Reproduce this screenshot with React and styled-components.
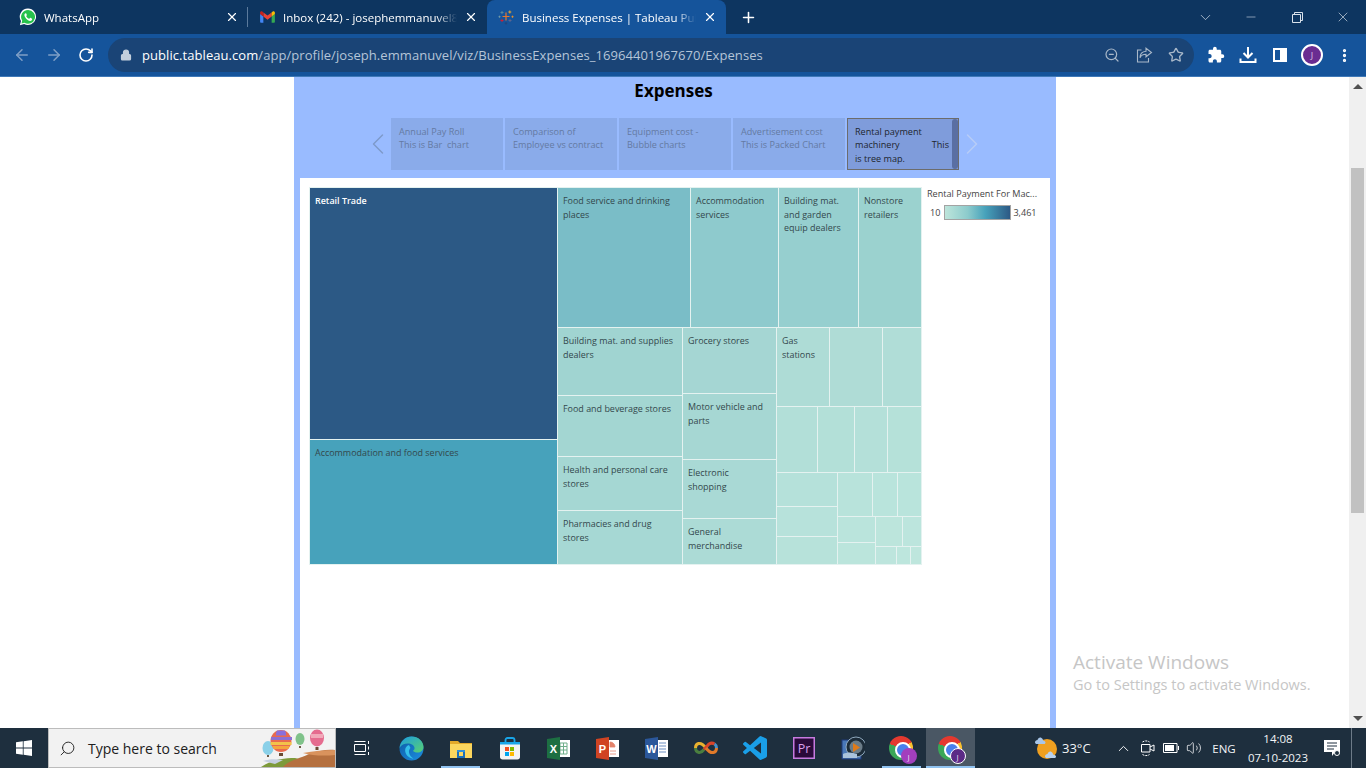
import React from 'react';
import styled, { createGlobalStyle } from 'styled-components';
import { ArrowLeft, ArrowRight, RotateCw, Lock, ZoomOut, Star, X, Plus, ChevronDown, ChevronUp, ChevronLeft, ChevronRight, Minus, Search as SearchGlyph, Volume2, MoreVertical } from 'lucide-react';
import { MdExtension } from 'react-icons/md';

const GlobalStyle = createGlobalStyle`
  html, body { margin: 0; padding: 0; background: #fff; overflow: hidden; }
  * { box-sizing: border-box; }
`;

/* treemap layout: nested rows and columns, sizes in px along the parent's axis */
const cell = (size, color, label, extra = {}) => ({ size, color, label, ...extra });
const group = (dir, size, children) => ({ dir, size, children });

const TREE = group('row', 612, [
  group('col', 248, [
    cell(252, '#2c5985', ['Retail Trade'], { light: true }),
    cell(125, '#47a2bb', ['Accommodation and food services']),
  ]),
  group('col', 364, [
    group('row', 140, [
      cell(133, '#7abdc7', ['Food service and drinking', 'places']),
      cell(88, '#8ecacd', ['Accommodation', 'services']),
      cell(80, '#96cfcf', ['Building mat.', 'and garden', 'equip dealers']),
      cell(63, '#9bd2cf', ['Nonstore', 'retailers']),
    ]),
    group('row', 237, [
      group('col', 125, [
        cell(68, '#a0d4d1', ['Building mat. and supplies', 'dealers']),
        cell(61, '#a3d6d2', ['Food and beverage stores']),
        cell(54, '#a5d7d3', ['Health and personal care', 'stores']),
        cell(54, '#a6d8d4', ['Pharmacies and drug', 'stores']),
      ]),
      group('col', 94, [
        cell(66, '#a5d6d3', ['Grocery stores']),
        cell(66, '#a6d7d3', ['Motor vehicle and', 'parts']),
        cell(59, '#a9d9d5', ['Electronic', 'shopping']),
        cell(46, '#acdbd6', ['General', 'merchandise']),
      ]),
      group('col', 145, [
        group('row', 79, [
          cell(53, '#aedcd6', ['Gas', 'stations']),
          cell(53, '#afdcd6'),
          cell(39, '#b0ddd7'),
        ]),
        group('row', 66, [
          cell(41, '#b2dfd8'),
          cell(37, '#b3e0d8'),
          cell(33, '#b4e0d9'),
          cell(34, '#b5e1d9'),
        ]),
        group('row', 92, [
          group('col', 61, [
            cell(34, '#b5e1da'),
            cell(30, '#b7e2db'),
            cell(28, '#b7e2da'),
          ]),
          group('col', 84, [
            group('row', 44, [
              cell(35, '#b8e3db'),
              cell(25, '#b9e4dc'),
              cell(24, '#b9e4dc'),
            ]),
            group('row', 48, [
              group('col', 38, [
                cell(26, '#bae4dc'),
                cell(22, '#bbe5dc'),
              ]),
              group('col', 46, [
                group('row', 30, [
                  cell(27, '#bce5dc'),
                  cell(19, '#bce5dd'),
                ]),
                group('row', 18, [
                  cell(21, '#bde5dd'),
                  cell(14, '#bde6dd'),
                  cell(11, '#bee6dd'),
                ]),
              ]),
            ]),
          ]),
        ]),
      ]),
    ]),
  ]),
]);

const STORY = [
  { lines: ['Annual Pay Roll', 'This is Bar  chart'] },
  { lines: ['Comparison of', 'Employee vs contract'] },
  { lines: ['Equipment cost -', 'Bubble charts'] },
  { lines: ['Advertisement cost', 'This is Packed Chart'] },
];

const Screen = styled.div`
  width: 1366px;
  height: 768px;
  display: flex;
  flex-direction: column;
  overflow: hidden;
  position: relative;
  font-family: 'Open Sans', 'Liberation Sans', sans-serif;
`;

const TabStrip = styled.div`
  height: 34px;
  flex: none;
  background: #0d3560;
  display: flex;
  padding-left: 9px;
  color: #fff;
`;

const Tab = styled.div`
  width: 239px;
  height: 34px;
  display: flex;
  align-items: center;
  padding: 0 9px 0 10px;
  gap: 7px;
  position: relative;
  border-radius: 8px 8px 0 0;
  background: ${p => (p.$active ? '#15549b' : 'transparent')};
  font-size: 11.5px;
  svg { flex: none; }
  ${p => p.$divider && `
    &::after {
      content: '';
      position: absolute;
      right: 0;
      top: 7px;
      width: 1px;
      height: 20px;
      background: #5b7a9c;
    }
  `}
`;

const TabIcon = styled.div`
  width: 18px;
  flex: none;
  display: flex;
  align-items: center;
  justify-content: center;
`;

const TabTitle = styled.span`
  flex: 1;
  overflow: hidden;
  white-space: nowrap;
  -webkit-mask-image: linear-gradient(to right, #000 88%, transparent 100%);
  mask-image: linear-gradient(to right, #000 88%, transparent 100%);
`;

const NewTab = styled.div`
  margin-left: 14px;
  height: 34px;
  display: flex;
  align-items: center;
`;

const WindowControls = styled.div`
  margin-left: auto;
  display: flex;
`;

const WindowButton = styled.div`
  width: 46px;
  height: 34px;
  display: flex;
  align-items: center;
  justify-content: center;
  color: #d9e2ec;
`;

const Toolbar = styled.div`
  height: 43px;
  flex: none;
  background: #15549b;
  border-bottom: 1px solid #3f79b8;
  display: flex;
  align-items: center;
  padding-left: 6px;
  color: #fff;
`;

const ToolButton = styled.div`
  width: 32px;
  height: 32px;
  flex: none;
  display: flex;
  align-items: center;
  justify-content: center;
  color: ${p => p.$color || '#fff'};
`;

const Omnibox = styled.div`
  width: 1086px;
  height: 34px;
  margin: 0 6px;
  border-radius: 17px;
  background: #1a4476;
  display: flex;
  align-items: center;
  padding: 0 2px 0 12px;
`;

const Url = styled.div`
  margin-left: 10px;
  flex: 1;
  font-size: 13px;
  color: #b5c5d8;
  white-space: nowrap;
  letter-spacing: 0.065px;
  b { font-weight: 400; color: #fff; }
`;

const Avatar = styled.div`
  width: 22px;
  height: 22px;
  border-radius: 50%;
  background: #6a2c91;
  border: 2px solid #fff;
  color: #d9c6e5;
  font-size: 9px;
  display: flex;
  align-items: center;
  justify-content: center;
`;

const Viewport = styled.div`
  flex: 1;
  min-height: 0;
  display: flex;
  background: #fff;
`;

const Page = styled.div`
  flex: 1;
  padding-left: 294px;
`;

const Panel = styled.div`
  width: 762px;
  height: 100%;
  background: #99bbff;
  padding: 0 6px;
  display: flex;
  flex-direction: column;
`;

const Title = styled.h1`
  margin: 0 0 0 -3px;
  height: 28px;
  line-height: 28px;
  text-align: center;
  font-size: 17px;
  font-weight: 700;
  color: #000;
`;

const StoryNav = styled.div`
  margin-top: 13px;
  height: 52px;
  display: flex;
  justify-content: center;
  gap: 2px;
`;

const StoryArrow = styled.div`
  width: 20px;
  margin: ${p => (p.$right ? '0 0 0 -2px' : '0 -2px 0 0')};
  display: flex;
  align-items: center;
  justify-content: ${p => (p.$right ? 'flex-end' : 'flex-start')};
  color: ${p => (p.$right ? '#b7ccf7' : '#7e9acb')};
  svg { margin: ${p => (p.$right ? '0 -11px 0 0' : '0 0 0 -11px')}; flex: none; }
`;

const StoryCard = styled.div`
  width: 112px;
  height: 52px;
  background: ${p => (p.$selected ? '#7f9cdb' : '#8aabea')};
  border: ${p => (p.$selected ? '1px solid #6c6c6c' : 'none')};
  color: ${p => (p.$selected ? '#20252e' : '#647aa2')};
  padding: ${p => (p.$selected ? '5.5px 9px 0 7px' : '6.5px 8px 0')};
  font-size: 9.1px;
  line-height: 13.5px;
  position: relative;
  white-space: pre;
`;

const StoryThumb = styled.div`
  position: absolute;
  right: 0;
  top: 0;
  bottom: 0;
  width: 6px;
  border-radius: 3px;
  background: #5a6fa3;
`;

const SpreadLine = styled.div`
  display: flex;
  justify-content: space-between;
`;

const Sheet = styled.div`
  margin-top: 8px;
  flex: 1;
  background: #fff;
  padding: 9px;
  display: flex;
  align-items: flex-start;
`;

const TreeFrame = styled.div`
  display: flex;
  border-left: 1px solid #e4f2f0;
  border-top: 1px solid #e4f2f0;
`;

const Group = styled.div`
  flex: 0 0 ${p => p.$size}px;
  display: flex;
  flex-direction: ${p => (p.$dir === 'row' ? 'row' : 'column')};
  min-width: 0;
  min-height: 0;
`;

const Cell = styled.div`
  flex: 0 0 ${p => p.$size}px;
  background: ${p => p.$color};
  border-right: 1px solid #e4f2f0;
  border-bottom: 1px solid #e4f2f0;
  padding: 6px 3px 0 5px;
  font-size: 8.95px;
  line-height: 13.7px;
  white-space: nowrap;
  overflow: hidden;
  color: ${p => (p.$light ? '#fff' : '#33484c')};
  font-weight: ${p => (p.$light ? 600 : 400)};
`;

const Legend = styled.div`
  margin-left: 5px;
  width: 114px;
  font-size: 9.1px;
  color: #444;
`;

const LegendTitle = styled.div`
  height: 13px;
  line-height: 13px;
  white-space: nowrap;
`;

const LegendRow = styled.div`
  margin-top: 5px;
  display: flex;
  align-items: center;
  padding-left: 3px;
  gap: 2px;
`;

const LegendRamp = styled.div`
  width: 67px;
  height: 15px;
  margin-left: 2px;
  border: 1px solid #a3a3a3;
  background: linear-gradient(to right, #bde5db, #8ccbcc 35%, #47a2bb 62%, #2c5985);
`;

const Scrollbar = styled.div`
  width: 17px;
  flex: none;
  background: #f0f0f0;
  display: flex;
  flex-direction: column;
  align-items: center;
`;

const ScrollArrow = styled.div`
  width: 0;
  height: 0;
  flex: none;
  border-left: 5px solid transparent;
  border-right: 5px solid transparent;
  ${p => (p.$down ? 'border-top: 5px solid #505050; margin-top: 203px;' : 'border-bottom: 5px solid #505050; margin-top: 7px;')}
`;

const ScrollThumb = styled.div`
  width: 13px;
  height: 345px;
  flex: none;
  margin-top: 79px;
  background: #c1c1c1;
`;

const Watermark = styled.div`
  position: absolute;
  left: 1073px;
  top: 649px;
  color: #c6c6c6;
  pointer-events: none;
`;

const WatermarkHead = styled.div`
  font-size: 19px;
  line-height: 26px;
`;

const WatermarkSub = styled.div`
  font-size: 14.5px;
  line-height: 20px;
  white-space: nowrap;
`;

const Taskbar = styled.div`
  height: 40px;
  flex: none;
  background: #1e2f3e;
  display: flex;
  align-items: stretch;
  color: #fff;
`;

const StartButton = styled.div`
  width: 48px;
  display: flex;
  align-items: center;
  justify-content: center;
`;

const SearchBox = styled.div`
  width: 288px;
  height: 40px;
  background: #f2f2f2;
  border: 1px solid #bcbcbc;
  display: flex;
  align-items: center;
  padding-left: 10px;
  color: #202020;
  font-size: 14px;
  overflow: hidden;
`;

const SearchLabel = styled.span`
  margin-left: 12px;
  white-space: nowrap;
`;

const SearchArt = styled.svg`
  margin-left: auto;
  flex: none;
`;

const Slot = styled.div`
  width: ${p => p.$w || 49}px;
  display: flex;
  align-items: center;
  justify-content: center;
  position: relative;
  background: ${p => (p.$active ? '#4a5764' : 'transparent')};
  ${p => p.$running && `
    &::after {
      content: '';
      position: absolute;
      left: 5px;
      right: 5px;
      bottom: 0;
      height: 2px;
      background: #90c2f0;
    }
  `}
  ${p => p.$active && `
    &::after {
      content: '';
      position: absolute;
      left: 0;
      right: 0;
      bottom: 0;
      height: 2px;
      background: #90c2f0;
    }
  `}
`;

const Tray = styled.div`
  margin-left: auto;
  display: flex;
  align-items: stretch;
`;

const TrayItem = styled.div`
  width: ${p => p.$w}px;
  display: flex;
  align-items: center;
  justify-content: ${p => p.$align || 'center'};
  font-size: ${p => p.$size || 12}px;
  color: #f2f4f6;
`;

const Clock = styled.div`
  text-align: center;
  font-size: 11.5px;
  line-height: 19px;
  white-space: nowrap;
`;

const TrayEnd = styled.div`
  width: 15px;
  margin-left: 10px;
  border-left: 1px solid #6d7b88;
`;

const ChromeRing = styled.div`
  width: 24px;
  height: 24px;
  border-radius: 50%;
  position: relative;
  margin: 0 2px 0 0;
  background: conic-gradient(#e5392f 0deg 60deg, #fbc02d 60deg 170deg, #3aa757 170deg 290deg, #e5392f 290deg);
  &::before {
    content: '';
    position: absolute;
    left: 6px;
    top: 6px;
    width: 12px;
    height: 12px;
    border-radius: 50%;
    background: #4a80ec;
    border: 2px solid #fff;
  }
`;

const ChromeBadge = styled.div`
  position: absolute;
  right: -4px;
  bottom: -4px;
  width: 16px;
  height: 16px;
  border-radius: 50%;
  background: ${p => (p.$dark ? '#5b2a86' : '#a23fbd')};
  border: ${p => (p.$dark ? '1.5px solid #fff' : 'none')};
  color: #e9d8f0;
  font-size: 8px;
  display: flex;
  align-items: center;
  justify-content: center;
`;

const WhatsAppIcon = () => (
  <svg width="18" height="18" viewBox="0 0 18 18">
    <path d="M9 .6a8.2 8.2 0 0 0-7 12.5L.9 17.2l4.2-1.1A8.2 8.2 0 1 0 9 .6z" fill="#fff" />
    <path d="M9 2a6.9 6.9 0 0 0-5.8 10.6l-.7 2.8 2.9-.7A6.9 6.9 0 1 0 9 2z" fill="#27c24c" />
    <path d="M6.6 5.2c-.5 0-1.2.7-1.2 1.8 0 2.3 3 5.6 5.7 5.9 1.1.1 1.9-.6 2-1.3.1-.5.1-.8 0-.9l-1.7-.9c-.2-.1-.3 0-.4.1l-.7.8c-.1.1-.3.1-.5 0-1.1-.5-2-1.3-2.6-2.4-.1-.2 0-.3.1-.4l.5-.7c.1-.1.1-.2 0-.4l-.7-1.5z" fill="#fff" />
  </svg>
);

const GmailIcon = () => (
  <svg width="15" height="12" viewBox="0 0 16 13">
    <path d="M0 3v8.6c0 .6.5 1.1 1.1 1.1h2.4V6z" fill="#4285f4" />
    <path d="M12.5 6v6.700h2.400c.6 0 1.100-.5 1.100-1.100V3z" fill="#34a853" />
    <path d="M3.500 6V1.500L8 4.900l4.500-3.400V6L8 9.400z" fill="#ea4335" />
    <path d="M0 1.800C0 .6 1.400-.2 2.400.6l1.100.9V6L0 3.300z" fill="#c5221f" />
    <path d="M16 1.800C16 .6 14.600-.2 13.600.6l-1.100.9V6L16 3.300z" fill="#fbbc04" />
  </svg>
);

const TableauIcon = () => (
  <svg width="16" height="16" viewBox="0 0 16 16" strokeWidth="1" fill="none">
    <path d="M8 3.500v8M4.500 7.500h7" stroke="#e8762b" strokeWidth="1.200" />
    <path d="M11.800 1.500v3M10.300 3h3" stroke="#eaa52e" />
    <path d="M4 2v3M2.500 3.500h3" stroke="#59879b" />
    <path d="M4 10v3M2.500 11.500h3" stroke="#c72037" />
    <path d="M12 10v3M10.500 11.500h3" stroke="#5b6591" />
    <path d="M8 13v2.600M6.700 14.300h2.600" stroke="#1f457e" />
    <path d="M1.500 6.700v2M.5 7.700h2" stroke="#7099a6" />
    <path d="M14.500 6.700v2M13.500 7.700h2" stroke="#eb912b" />
  </svg>
);

const ShareIcon = () => (
  <svg width="17" height="16" viewBox="0 0 17 16" fill="none" stroke="#a9b8c9" strokeWidth="1.100">
    <path d="M5.500 3H1.500v12h11v-4" />
    <path d="M10 1.200l5.500 4.300-5.500 4.300V7.200c-3 0-5 1-6 3.600 0-4 2.500-6.300 6-6.600z" />
  </svg>
);

const DownloadIcon = () => (
  <svg width="18" height="18" viewBox="0 0 18 18" fill="none" stroke="#fff" strokeWidth="2">
    <path d="M9 1v10M4.500 7L9 11.500 13.500 7" />
    <path d="M1.500 12.500v3.500h15v-3.500" />
  </svg>
);

const SidePanelIcon = () => (
  <svg width="14" height="14" viewBox="0 0 14 14">
    <path d="M0 0h14v14H0zM2 2v10h5V2z" fill="#fff" fillRule="evenodd" />
  </svg>
);

const RestoreIcon = () => (
  <svg width="11" height="11" viewBox="0 0 11 11" fill="none" stroke="#d9e2ec">
    <path d="M.5 2.500h8v8h-8zM2.500 2.500v-2h8v8h-2" />
  </svg>
);

const WindowsLogo = () => (
  <svg width="16" height="16" viewBox="0 0 16 16" fill="#fff">
    <path d="M0 2.300l6.800-1v6.300H0zM7.600 1.200L16 0v7.600H7.600zM0 8.400h6.800v6.300l-6.800-1zM7.600 8.400H16V16l-8.400-1.200z" />
  </svg>
);

const Balloons = () => (
  <SearchArt width="82" height="38" viewBox="0 0 82 38">
    <path d="M8 38c10-7 22-9 34-9l40 9z" fill="#7d9a3a" />
    <path d="M30 38c6-7 16-8 26-13 8-3 18-5 26-4v17z" fill="#b5703f" />
    <path d="M50 24c10-2 22-3 32-3v5c-10 1-22 1-32-2z" fill="#d9935d" />
    <path d="M10 32c6-2 12-2 20-1l-8 4z" fill="#c5cfe0" />
    <ellipse cx="15" cy="19" rx="5.500" ry="7" fill="#8ad0e8" />
    <rect x="14" y="26" width="2" height="2" fill="#6b5a45" />
    <ellipse cx="28" cy="12" rx="10.500" ry="11" fill="#e86a4f" />
    <path d="M18 8h21v3H18z" fill="#8d6fd1" />
    <path d="M17.600 13h21v3h-21z" fill="#f2c24a" />
    <path d="M19 17h18l-2 3H21z" fill="#f5a53c" />
    <path d="M24 1.500h8c1 2 1 3 1 5H23c0-2 0-3 1-5z" fill="#8a6fdb" />
    <rect x="26" y="24" width="4" height="3" fill="#6b4a32" />
    <ellipse cx="47" cy="10" rx="4.500" ry="6" fill="#7fc28a" />
    <rect x="46" y="17" width="2" height="2" fill="#6b5a45" />
    <ellipse cx="64" cy="9" rx="7" ry="8.500" fill="#e56c8f" />
    <path d="M58 5h12v4H58z" fill="#f1a9b9" />
    <rect x="62.500" y="18" width="3" height="3" fill="#6b4a32" />
  </SearchArt>
);

const TaskViewIcon = () => (
  <svg width="16" height="16" viewBox="0 0 16 16" fill="none" stroke="#fff">
    <path d="M.5 4.500h11v7H.5zM.5 1.500h11M.5 14.500h11M14.500 1v3M14.500 6.500v3M14.500 12v3" />
  </svg>
);

const EdgeIcon = () => (
  <svg width="25" height="25" viewBox="0 0 25 25">
    <defs>
      <linearGradient id="edgeTop" x1="0" y1="0" x2="1" y2="1">
        <stop offset="0" stopColor="#1b9de2" />
        <stop offset="1" stopColor="#5ad06f" />
      </linearGradient>
      <linearGradient id="edgeBottom" x1="0" y1="0" x2="1" y2="1">
        <stop offset="0" stopColor="#0c59a4" />
        <stop offset="1" stopColor="#1d8fe0" />
      </linearGradient>
    </defs>
    <circle cx="12.500" cy="12.500" r="12" fill="url(#edgeBottom)" />
    <path d="M.5 12C1.500 5 6.500.5 12.500.5c7 0 12 5 12 10.500 0 3.500-3 5.500-6 5.500-2 0-4-.7-4.500-1.800 2-1 2.300-4-.5-6C10 6.500 3 7 .5 12z" fill="url(#edgeTop)" />
    <path d="M10 9c-3 1-4.500 4-3.500 7.500 1 3.500 4.500 6 8 6-2-1-4-3-4.500-6-.3-2 .5-3.500 1.500-4.500z" fill="#34c0eb" />
  </svg>
);

const ExplorerIcon = () => (
  <svg width="22" height="19" viewBox="0 0 22 19">
    <path d="M0 2h8l2 2h12v15H0z" fill="#e3a92a" />
    <path d="M0 5h22v14H0z" fill="#fbd65e" />
    <path d="M7 11h8v2H7z" fill="#2f8fd8" />
    <path d="M7 13h2v4h4v-4h2v6H7z" fill="#1a6eb8" />
  </svg>
);

const StoreIcon = () => (
  <svg width="20" height="23" viewBox="0 0 20 23">
    <path d="M1 5h18c.6 0 1 .4 1 1v14c0 1.500-1 2.500-2.500 2.500h-15C1 22.500 0 21.500 0 20V6c0-.6.4-1 1-1z" fill="#f3f3f3" />
    <path d="M5.500 5V3c0-1 .8-2 2-2h5c1.200 0 2 1 2 2v2" fill="none" stroke="#19a5e8" strokeWidth="1.800" />
    <path d="M0 5h20v2.500H0z" fill="#19a5e8" />
    <path d="M5 10h4v4H5z" fill="#f25022" />
    <path d="M10 10h4v4h-4z" fill="#7fba00" />
    <path d="M5 15h4v4H5z" fill="#00a4ef" />
    <path d="M10 15h4v4h-4z" fill="#ffb900" />
  </svg>
);

const OfficeIcon = ({ letter, dark, light, lines }) => (
  <svg width="23" height="23" viewBox="0 0 23 23">
    <path d="M9 3h14v17H9z" fill="#fff" />
    {lines === 'grid' && <path d="M13 6h7v11h-7zM13 9.500h7M13 13h7M16.500 6v11" fill="none" stroke={light} />}
    {lines === 'text' && <path d="M14 6h7M14 9h7M14 12h7M14 15h7" fill="none" stroke={light} strokeWidth="1.200" />}
    {lines === 'slide' && <path d="M14 5a5 5 0 0 1 5 5h-5zM14 14h6M14 17h6" fill={light} stroke={light} strokeWidth="0.800" />}
    <path d="M0 2l13-2v23L0 21z" fill={dark} />
    <text x="6.500" y="15.500" textAnchor="middle" fill="#fff" fontSize="11" fontWeight="700" fontFamily="Liberation Sans, sans-serif">{letter}</text>
  </svg>
);

const InfinityIcon = () => (
  <svg width="24" height="14" viewBox="0 0 24 14" fill="none" strokeWidth="3">
    <path d="M12 7C9 3 6.500 2 4.500 2.500 2 3.200 1.500 5 1.500 7" stroke="#e9b12f" />
    <path d="M1.500 7c0 2 1 4 3.500 4.500 2 .3 3.500-1 5-3" stroke="#4b7f3f" />
    <path d="M10 8.500l5-5.500c2-1.200 4-1 5.500 0" stroke="#d8452a" />
    <path d="M12 7c3 4 5.500 5 7.500 4.500 2.500-.7 3-2.500 3-4.500" stroke="#e07a2a" />
    <path d="M22.500 7c0-2-.7-3.200-2-4" stroke="#4a90c8" />
  </svg>
);

const VsCodeIcon = () => (
  <svg width="24" height="24" viewBox="0 0 24 24">
    <path fill="#1a9fe8" d="M23.150 2.587L18.210.21a1.494 1.494 0 0 0-1.705.29l-9.460 8.630-4.120-3.128a.999.999 0 0 0-1.276.057L.327 7.261A1 1 0 0 0 .326 8.740L3.899 12 .326 15.260a1 1 0 0 0 .001 1.479L1.650 17.940a.999.999 0 0 0 1.276.057l4.120-3.128 9.460 8.630a1.492 1.492 0 0 0 1.704.29l4.942-2.377A1.500 1.500 0 0 0 24 20.060V3.939a1.500 1.500 0 0 0-.850-1.352zm-5.146 14.861L10.826 12l7.178-5.448v10.896z" />
  </svg>
);

const PremiereIcon = () => (
  <svg width="22" height="22" viewBox="0 0 22 22">
    <rect x="0.750" y="0.750" width="20.500" height="20.500" fill="#2a0a3a" stroke="#c77be0" strokeWidth="1.500" />
    <text x="11" y="15.500" textAnchor="middle" fill="#d9a0ee" fontSize="12.500" fontFamily="Open Sans, sans-serif">Pr</text>
  </svg>
);

const MediaIcon = () => (
  <svg width="24" height="24" viewBox="0 0 24 24">
    <rect x="1" y="4" width="19" height="19" fill="#4a78b8" stroke="#1f3a78" />
    <circle cx="15" cy="11" r="10" fill="#1c2b38" stroke="#8fa8bd" />
    <circle cx="15" cy="11" r="6.500" fill="#6b7c88" />
    <path d="M12 7l7 4.500-7 4.500z" fill="#e07b1a" />
    <path d="M2 18c4-2 9-2 14 0v4H2z" fill="#a9c2dc" />
  </svg>
);

const ChromeIcon = ({ dark }) => (
  <ChromeRing>
    <ChromeBadge $dark={dark}>J</ChromeBadge>
  </ChromeRing>
);

const WeatherIcon = () => (
  <svg width="25" height="24" viewBox="0 0 25 24">
    <circle cx="13" cy="13" r="10" fill="#f0a020" />
    <path d="M1 6.500c0-1.500 1.200-2.500 2.500-2.500C4 2 6 1 7.500 2c1 .6 1.500 1.500 1.500 2.500 1.500 0 2.500 1 2.500 2 0 .8-.5 1.500-1.500 1.500H3c-1.200 0-2-.7-2-1.500z" fill="#a9c6e8" />
    <path d="M11 20.500c0-1.500 1.200-2.500 2.500-2.500.5-2 2.500-3 4-2 1 .6 1.500 1.500 1.500 2.500 1.500 0 3 1 3 2 0 .8-.5 1.500-1.500 1.500H13c-1.200 0-2-.7-2-1.500z" fill="#b9d2ee" />
  </svg>
);

const MeetIcon = () => (
  <svg width="16" height="18" viewBox="0 0 16 18" fill="none" stroke="#fff">
    <path d="M1.500 5.500h8.500v7.500H1.500zM10 8l4-2v6l-4-2" />
    <path d="M2.500 3c2-1.500 5-1.500 7 0M2.500 15.500c2 1.500 5 1.500 7 0" strokeDasharray="2 1" />
  </svg>
);

const BatteryIcon = () => (
  <svg width="16" height="10" viewBox="0 0 16 10">
    <path d="M.5.5h13.500v9H.5z" fill="none" stroke="#fff" />
    <path d="M2 2h9v6H2zM15 3h1v4h-1z" fill="#fff" />
  </svg>
);

const NotificationIcon = () => (
  <svg width="17" height="17" viewBox="0 0 17 17">
    <path d="M0 0h16v12h-5l-3 4v-4H0z" fill="#fff" />
    <path d="M3 3h10M3 6h10M3 9h7" stroke="#1e2f3e" />
    <circle cx="13" cy="13" r="2.500" fill="#1e2f3e" stroke="#fff" />
  </svg>
);

function TreeNode({ node }) {
  if (node.children) {
    return (
      <Group $dir={node.dir} $size={node.size}>
        {node.children.map((child, i) => <TreeNode key={i} node={child} />)}
      </Group>
    );
  }
  return (
    <Cell $size={node.size} $color={node.color} $light={node.light}>
      {(node.label || []).map(line => <div key={line}>{line}</div>)}
    </Cell>
  );
}

export default function App() {
  return (
    <Screen>
      <GlobalStyle />
      <TabStrip>
        <Tab $divider>
          <TabIcon><WhatsAppIcon /></TabIcon>
          <TabTitle>WhatsApp</TabTitle>
          <X size={14} strokeWidth={2} />
        </Tab>
        <Tab>
          <TabIcon><GmailIcon /></TabIcon>
          <TabTitle>Inbox (242) - josephemmanuvel8</TabTitle>
          <X size={14} strokeWidth={2} />
        </Tab>
        <Tab $active>
          <TabIcon><TableauIcon /></TabIcon>
          <TabTitle>Business Expenses | Tableau Public</TabTitle>
          <X size={14} strokeWidth={2} />
        </Tab>
        <NewTab><Plus size={17} strokeWidth={2.2} /></NewTab>
        <WindowControls>
          <WindowButton><ChevronDown size={17} strokeWidth={1} /></WindowButton>
          <WindowButton><Minus size={14} strokeWidth={1} /></WindowButton>
          <WindowButton><RestoreIcon /></WindowButton>
          <WindowButton><X size={16} strokeWidth={1} /></WindowButton>
        </WindowControls>
      </TabStrip>

      <Toolbar>
        <ToolButton $color="#7f9fc6"><ArrowLeft size={18} strokeWidth={2} /></ToolButton>
        <ToolButton $color="#7f9fc6"><ArrowRight size={18} strokeWidth={2} /></ToolButton>
        <ToolButton><RotateCw size={16} strokeWidth={2.4} /></ToolButton>
        <Omnibox>
          <Lock size={12} strokeWidth={2.4} color="#c3cfdc" fill="#c3cfdc" />
          <Url><b>public.tableau.com</b>/app/profile/joseph.emmanuvel/viz/BusinessExpenses_16964401967670/Expenses</Url>
          <ToolButton $color="#a9b8c9"><ZoomOut size={16} strokeWidth={1.8} /></ToolButton>
          <ToolButton><ShareIcon /></ToolButton>
          <ToolButton $color="#a9b8c9"><Star size={16} strokeWidth={2} /></ToolButton>
        </Omnibox>
        <ToolButton><MdExtension size={18} /></ToolButton>
        <ToolButton><DownloadIcon /></ToolButton>
        <ToolButton><SidePanelIcon /></ToolButton>
        <ToolButton><Avatar>J</Avatar></ToolButton>
        <ToolButton><MoreVertical size={17} strokeWidth={2.6} /></ToolButton>
      </Toolbar>

      <Viewport>
        <Page>
          <Panel>
            <Title>Expenses</Title>
            <StoryNav>
              <StoryArrow><ChevronLeft size={36} strokeWidth={1} /></StoryArrow>
              {STORY.map(card => (
                <StoryCard key={card.lines[0]}>
                  {card.lines.map(line => <div key={line}>{line}</div>)}
                </StoryCard>
              ))}
              <StoryCard $selected>
                <div>Rental payment</div>
                <SpreadLine><span>machinery</span><span>This</span></SpreadLine>
                <div>is tree map.</div>
                <StoryThumb />
              </StoryCard>
              <StoryArrow $right><ChevronRight size={36} strokeWidth={1} /></StoryArrow>
            </StoryNav>
            <Sheet>
              <TreeFrame>
                <TreeNode node={TREE} />
              </TreeFrame>
              <Legend>
                <LegendTitle>Rental Payment For Mac...</LegendTitle>
                <LegendRow>
                  <span>10</span>
                  <LegendRamp />
                  <span>3,461</span>
                </LegendRow>
              </Legend>
            </Sheet>
          </Panel>
        </Page>
        <Scrollbar>
          <ScrollArrow />
          <ScrollThumb />
          <ScrollArrow $down />
        </Scrollbar>
      </Viewport>

      <Watermark>
        <WatermarkHead>Activate Windows</WatermarkHead>
        <WatermarkSub>Go to Settings to activate Windows.</WatermarkSub>
      </Watermark>

      <Taskbar>
        <StartButton><WindowsLogo /></StartButton>
        <SearchBox>
          <SearchGlyph size={17} strokeWidth={1.3} style={{ transform: 'scaleX(-1)' }} />
          <SearchLabel>Type here to search</SearchLabel>
          <Balloons />
        </SearchBox>
        <Slot $w={51}><TaskViewIcon /></Slot>
        <Slot><EdgeIcon /></Slot>
        <Slot $running><ExplorerIcon /></Slot>
        <Slot><StoreIcon /></Slot>
        <Slot><OfficeIcon letter="X" dark="#1d6f42" light="#6fae8a" lines="grid" /></Slot>
        <Slot><OfficeIcon letter="P" dark="#d04423" light="#e2826a" lines="slide" /></Slot>
        <Slot><OfficeIcon letter="W" dark="#2b579a" light="#6c8fc4" lines="text" /></Slot>
        <Slot><InfinityIcon /></Slot>
        <Slot><VsCodeIcon /></Slot>
        <Slot><PremiereIcon /></Slot>
        <Slot><MediaIcon /></Slot>
        <Slot $running><ChromeIcon /></Slot>
        <Slot $active><ChromeIcon dark /></Slot>
        <Tray>
          <TrayItem $w={32}><WeatherIcon /></TrayItem>
          <TrayItem $w={48} $align="flex-start" $size={13}>33°C</TrayItem>
          <TrayItem $w={26}><ChevronUp size={17} strokeWidth={1.4} /></TrayItem>
          <TrayItem $w={24}><MeetIcon /></TrayItem>
          <TrayItem $w={22}><BatteryIcon /></TrayItem>
          <TrayItem $w={24}><Volume2 size={16} strokeWidth={1.2} /></TrayItem>
          <TrayItem $w={36} $size={11.5}>ENG</TrayItem>
          <TrayItem $w={72}>
            <Clock>14:08<br />07-10-2023</Clock>
          </TrayItem>
          <TrayItem $w={27} $align="flex-end"><NotificationIcon /></TrayItem>
          <TrayEnd />
        </Tray>
      </Taskbar>
    </Screen>
  );
}
